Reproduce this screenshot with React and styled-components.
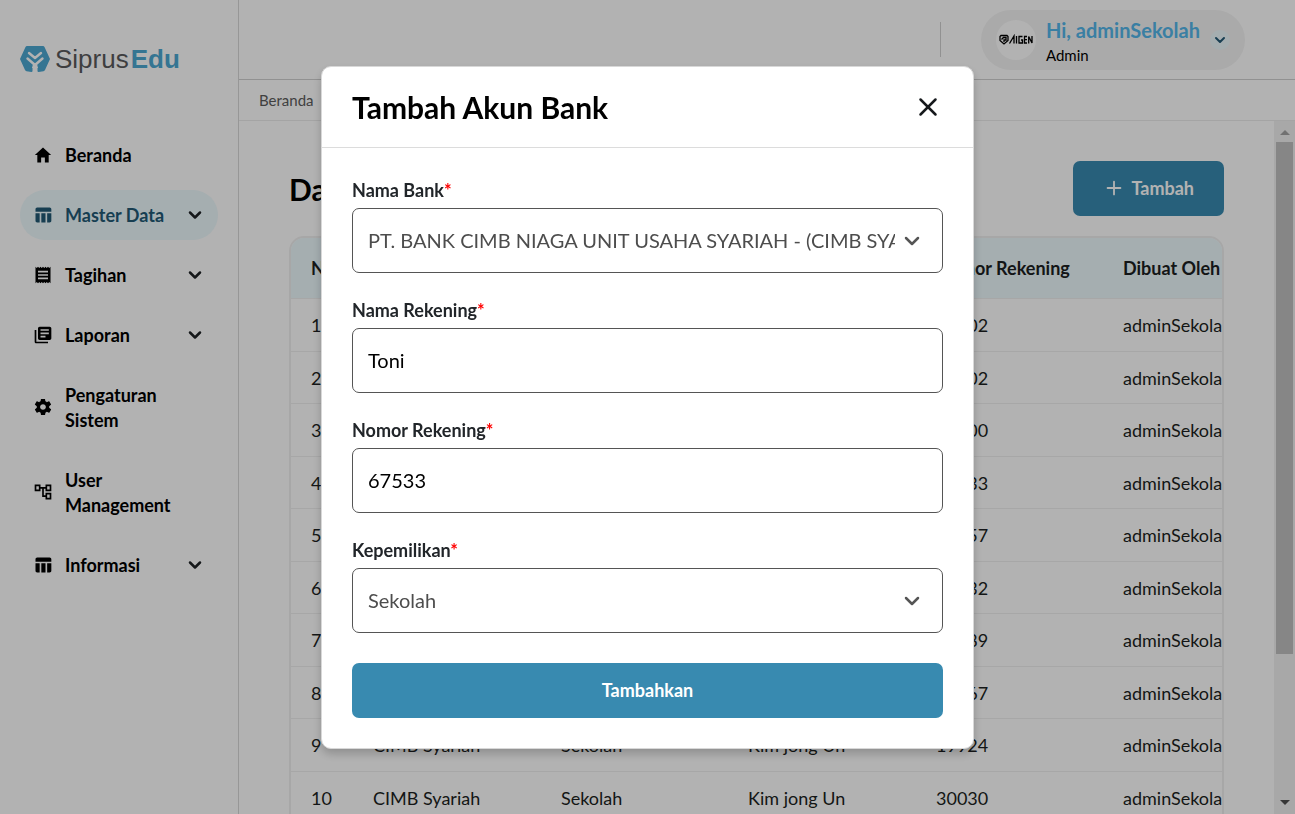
import React from 'react';
import styled, { createGlobalStyle } from 'styled-components';
import { ChevronDown, X, Plus } from 'lucide-react';
import { MdTableChart, MdReceipt, MdLibraryBooks, MdOutlineAccountTree } from 'react-icons/md';
import { IoMdHome, IoMdSettings } from 'react-icons/io';

const GlobalStyle = createGlobalStyle`
  *, *::before, *::after { box-sizing: border-box; }
  body { margin: 0; background: #fff; color: #000; font-family: Lato, "Liberation Sans", sans-serif; font-size: 18px; }
  h1, h2, p { margin: 0; }
  button, input, select { font-family: inherit; color: inherit; }
  button { cursor: pointer; border: 0; background: none; padding: 0; }
`;

const Shell = styled.div`
  display: flex;
  height: 100vh;
  overflow: hidden;
`;

const Sidebar = styled.aside`
  flex: none;
  width: 239px;
  padding: 45px 20px 0;
  border-right: 1px solid #d8d8d8;
`;

const Logo = styled.a`
  display: flex;
  align-items: center;
  gap: 5px;
  height: 28px;
  color: #5a5a5c;
  text-decoration: none;
  font: 26px/28px "Liberation Sans", sans-serif;
  b { margin-left: 2px; color: #4ca8d2; }
`;

const Nav = styled.nav`
  display: flex;
  flex-direction: column;
  gap: 10px;
  padding-top: 57px;
`;

const NavLink = styled.a`
  display: flex;
  align-items: center;
  gap: 12px;
  padding: 13px 13px 12px;
  border-radius: 25px;
  background: ${(p) => (p.$active ? '#ecf9fd' : 'transparent')};
  color: ${(p) => (p.$active ? '#225a75' : '#000')};
  font-size: 18px;
  font-weight: 700;
  line-height: 25px;
  text-decoration: none;
  span { flex: 1; }
  svg { flex: none; margin-bottom: 2px; }
  .chevron { color: #1f2326; }
`;

const Main = styled.div`
  flex: 1;
  min-width: 0;
  display: flex;
  flex-direction: column;
`;

const Topbar = styled.header`
  flex: none;
  display: flex;
  justify-content: flex-end;
  align-items: center;
  gap: 40px;
  height: 80px;
  padding-right: 50px;
  border-bottom: 1px solid #d0d0d0;
`;

const Divider = styled.div`
  width: 1px;
  height: 35px;
  background: #d0d0d0;
`;

const Profile = styled.button`
  display: flex;
  align-items: center;
  gap: 10px;
  height: 60px;
  padding: 0 15px;
  border-radius: 30px;
  background: #f4f4f4;
  text-align: left;
`;

const Avatar = styled.span`
  display: grid;
  place-items: center;
  width: 40px;
  height: 40px;
  border-radius: 50%;
  background: #fff;
`;

const ProfileText = styled.span`
  display: flex;
  flex-direction: column;
  padding-top: 2px;
`;

const Greeting = styled.span`
  color: #53b6ea;
  font-size: 20px;
  font-weight: 700;
  line-height: 28px;
`;

const Role = styled.span`
  font-size: 15px;
  line-height: 22px;
`;

const RoundToggle = styled.span`
  display: grid;
  place-items: center;
  width: 20px;
  height: 20px;
  border-radius: 50%;
  background: #ecf9fd;
  color: #225a75;
`;

const Breadcrumb = styled.nav`
  flex: none;
  height: 41px;
  padding: 0 20px;
  border-bottom: 1px solid #ebebeb;
  font-size: 15px;
  line-height: 40px;
  a { color: #5c5c5c; text-decoration: none; }
`;

const ScrollArea = styled.div`
  flex: 1;
  min-height: 0;
  display: flex;
`;

const Content = styled.main`
  flex: 1;
  min-width: 0;
  overflow: hidden;
  padding: 40px 50px 0;
`;

const Scrollbar = styled.div`
  flex: none;
  display: flex;
  flex-direction: column;
  align-items: center;
  width: 21px;
  padding: 9px 0;
  background: #f1f1f1;
`;

const Thumb = styled.div`
  flex: 0 1 512px;
  width: 17px;
  margin: 7px 0 auto;
  background: #c1c1c1;
`;

const Arrow = styled.div`
  border: 5px solid transparent;
  border-top-width: ${(p) => (p.$up ? 0 : 5)}px;
  border-bottom-width: ${(p) => (p.$up ? 5 : 0)}px;
  border-top-color: #505050;
  border-bottom-color: #a3a3a3;
`;

const PageHead = styled.div`
  display: flex;
  justify-content: space-between;
  align-items: center;
  margin-bottom: 20px;
  h1 { font-size: 30px; font-weight: 700; line-height: 40px; }
`;

const Primary = styled.button`
  display: flex;
  justify-content: center;
  align-items: center;
  gap: 6px;
  height: 55px;
  width: ${(p) => (p.$full ? '100%' : 'auto')};
  margin-top: ${(p) => (p.$full ? 5 : 0)}px;
  padding: 0 30px 2px;
  border-radius: 7px;
  background: #388ab0;
  color: #fff;
  font-size: 18px;
  font-weight: 700;
`;

const TableBox = styled.div`
  overflow: hidden;
  border: 2px solid #f0f0f0;
  border-radius: 15px 15px 0 0;
`;

const Table = styled.table`
  table-layout: fixed;
  width: 1104px;
  border-collapse: collapse;
  font-size: 18px;
  color: #1c1f22;
  th, td {
    padding: 0 20px;
    text-align: left;
    white-space: nowrap;
    border-bottom: 1px solid #f0f0f0;
  }
  th { height: 60px; background: #ecf9fd; font-weight: 700; }
  td { height: 53px; }
  tr:nth-child(even) td { height: 52px; padding-top: 2px; }
`;

const Backdrop = styled.div`
  position: fixed;
  inset: 0;
  display: grid;
  place-items: center;
  padding-top: 1px;
  background: rgba(0, 0, 0, 0.3);
`;

const Dialog = styled.section`
  width: 653px;
  max-width: 100%;
  border: 1px solid #d8d8d8;
  border-radius: 10px;
  background: #fff;
  box-shadow: 0 5px 10px rgba(0, 0, 0, 0.2);
`;

const DialogHead = styled.header`
  display: flex;
  justify-content: space-between;
  align-items: center;
  height: 81px;
  padding: 0 30px;
  border-bottom: 1px solid #dcdcdc;
  h2 { font-size: 30px; font-weight: 700; line-height: 40px; }
`;

const CloseButton = styled.button`
  display: grid;
  place-items: center;
  width: 30px;
  height: 30px;
  color: #16191c;
`;

const Form = styled.form`
  display: flex;
  flex-direction: column;
  gap: 25px;
  padding: 30px;
`;

const Field = styled.div`
  display: flex;
  flex-direction: column;
  label {
    height: 25px;
    margin-bottom: 5px;
    font-size: 18px;
    font-weight: 700;
    line-height: 25px;
    color: #212529;
  }
  em { color: #f00; font-style: normal; }
`;

const control = `
  width: 100%;
  height: 65px;
  padding: 0 15px 2px;
  border: 1px solid #555;
  border-radius: 7px;
  background: #fff;
  font-size: 20px;
  outline: 0;
`;

const Input = styled.input`${control}`;

const Select = styled.select`
  ${control}
  appearance: none;
  padding-right: 47px;
  color: #4d4d4d;
`;

const SelectBox = styled.div`
  display: grid;
  align-items: center;
  > * { grid-area: 1 / 1; }
  svg { justify-self: end; margin-right: 19px; color: #555; pointer-events: none; }
`;

const menu = [
  { label: 'Beranda', icon: IoMdHome },
  { label: 'Master Data', icon: MdTableChart, active: true, sub: true },
  { label: 'Tagihan', icon: MdReceipt, sub: true },
  { label: 'Laporan', icon: MdLibraryBooks, sub: true },
  { label: 'Pengaturan Sistem', icon: IoMdSettings },
  { label: 'User Management', icon: MdOutlineAccountTree },
  { label: 'Informasi', icon: MdTableChart, sub: true },
];

const accounts = ['10002', '10002', '10000', '10033', '12357', '12332', '12389', '12367', '19924', '30030'];

function LogoMark() {
  return (
    <svg width="30" height="26" viewBox="0 0 30 26" aria-hidden="true">
      <path fill="#4ca8d2" d="M7 0h16q1 0 1.500 1L30 13l-5 11q-.5 1-1.500 1.200L18.500 26q-1 0-1-1v-4h-5v4q0 1-1 1l-5-.8Q5.500 25 5 24L0 13 5.500 1Q6 0 7 0z" />
      <path fill="none" stroke="#fff" strokeWidth="2.400" strokeLinecap="round" strokeLinejoin="round" d="M9 7l6 5 6-5M7.500 12.500L15 19l7.500-6.500" />
      <path fill="#fff" d="M13 18h4l1 4h-6z" />
    </svg>
  );
}

function SchoolMark() {
  return (
    <svg width="34" height="12" viewBox="0 0 34 12" fill="none" stroke="#000" strokeWidth="1.300" aria-hidden="true">
      <path d="M2 1.500h6l1 1v4L5 10 1 6.500v-4zM2.500 5.500l2-2h2.500v2.500H5v2" />
      <path d="M10.500 9.500L15 2v7.500M17.500 2v7.500M23.500 2.500h-3.500v6.500h3.500V6H22M28 2.500h-2.500v6.500H28M25.500 5.700H28M29.700 9.500v-7l3.300 6.500V2" />
    </svg>
  );
}

function SelectField({ id, label, value }) {
  return (
    <Field>
      <label htmlFor={id}>{label}<em>*</em></label>
      <SelectBox>
        <Select id={id} defaultValue={value}><option>{value}</option></Select>
        <ChevronDown size={24} strokeWidth={2.5} />
      </SelectBox>
    </Field>
  );
}

function TextField({ id, label, value }) {
  return (
    <Field>
      <label htmlFor={id}>{label}<em>*</em></label>
      <Input id={id} defaultValue={value} />
    </Field>
  );
}

export default function App() {
  return (
    <>
      <GlobalStyle />
      <Shell>
        <Sidebar>
          <Logo href="#"><LogoMark /><span>Siprus<b>Edu</b></span></Logo>
          <Nav>
            {menu.map(({ label, icon: Icon, active, sub }) => (
              <NavLink key={label} href="#" $active={active}>
                <Icon size={20} />
                <span>{label}</span>
                {sub && <ChevronDown className="chevron" size={20} strokeWidth={3} />}
              </NavLink>
            ))}
          </Nav>
        </Sidebar>
        <Main>
          <Topbar>
            <Divider />
            <Profile>
              <Avatar><SchoolMark /></Avatar>
              <ProfileText>
                <Greeting>Hi, adminSekolah</Greeting>
                <Role>Admin</Role>
              </ProfileText>
              <RoundToggle><ChevronDown size={16} strokeWidth={3} /></RoundToggle>
            </Profile>
          </Topbar>
          <Breadcrumb><a href="#">Beranda</a></Breadcrumb>
          <ScrollArea>
            <Content>
              <PageHead>
                <h1>Data Akun Bank</h1>
                <Primary><Plus size={22} strokeWidth={2} />Tambah</Primary>
              </PageHead>
              <TableBox>
                <Table>
                  <colgroup>
                    <col width="62" /><col width="188" /><col width="187" /><col width="188" /><col width="187" /><col />
                  </colgroup>
                  <thead>
                    <tr>
                      <th>No</th><th>Nama Bank</th><th>Kepemilikan</th><th>Nama Rekening</th><th>Nomor Rekening</th><th>Dibuat Oleh</th>
                    </tr>
                  </thead>
                  <tbody>
                    {accounts.map((number, i) => (
                      <tr key={i}>
                        <td>{i + 1}</td><td>CIMB Syariah</td><td>Sekolah</td><td>Kim jong Un</td><td>{number}</td><td>adminSekolah</td>
                      </tr>
                    ))}
                  </tbody>
                </Table>
              </TableBox>
            </Content>
            <Scrollbar aria-hidden="true">
              <Arrow $up />
              <Thumb />
              <Arrow />
            </Scrollbar>
          </ScrollArea>
        </Main>
      </Shell>
      <Backdrop>
        <Dialog role="dialog" aria-modal="true" aria-labelledby="dialog-title">
          <DialogHead>
            <h2 id="dialog-title">Tambah Akun Bank</h2>
            <CloseButton aria-label="Tutup"><X size={30} strokeWidth={2} /></CloseButton>
          </DialogHead>
          <Form onSubmit={(e) => e.preventDefault()}>
            <SelectField id="bank" label="Nama Bank" value="PT. BANK CIMB NIAGA UNIT USAHA SYARIAH - (CIMB SYARIAH)" />
            <TextField id="holder" label="Nama Rekening" value="Toni" />
            <TextField id="number" label="Nomor Rekening" value="67533" />
            <SelectField id="owner" label="Kepemilikan" value="Sekolah" />
            <Primary $full type="submit">Tambahkan</Primary>
          </Form>
        </Dialog>
      </Backdrop>
    </>
  );
}
